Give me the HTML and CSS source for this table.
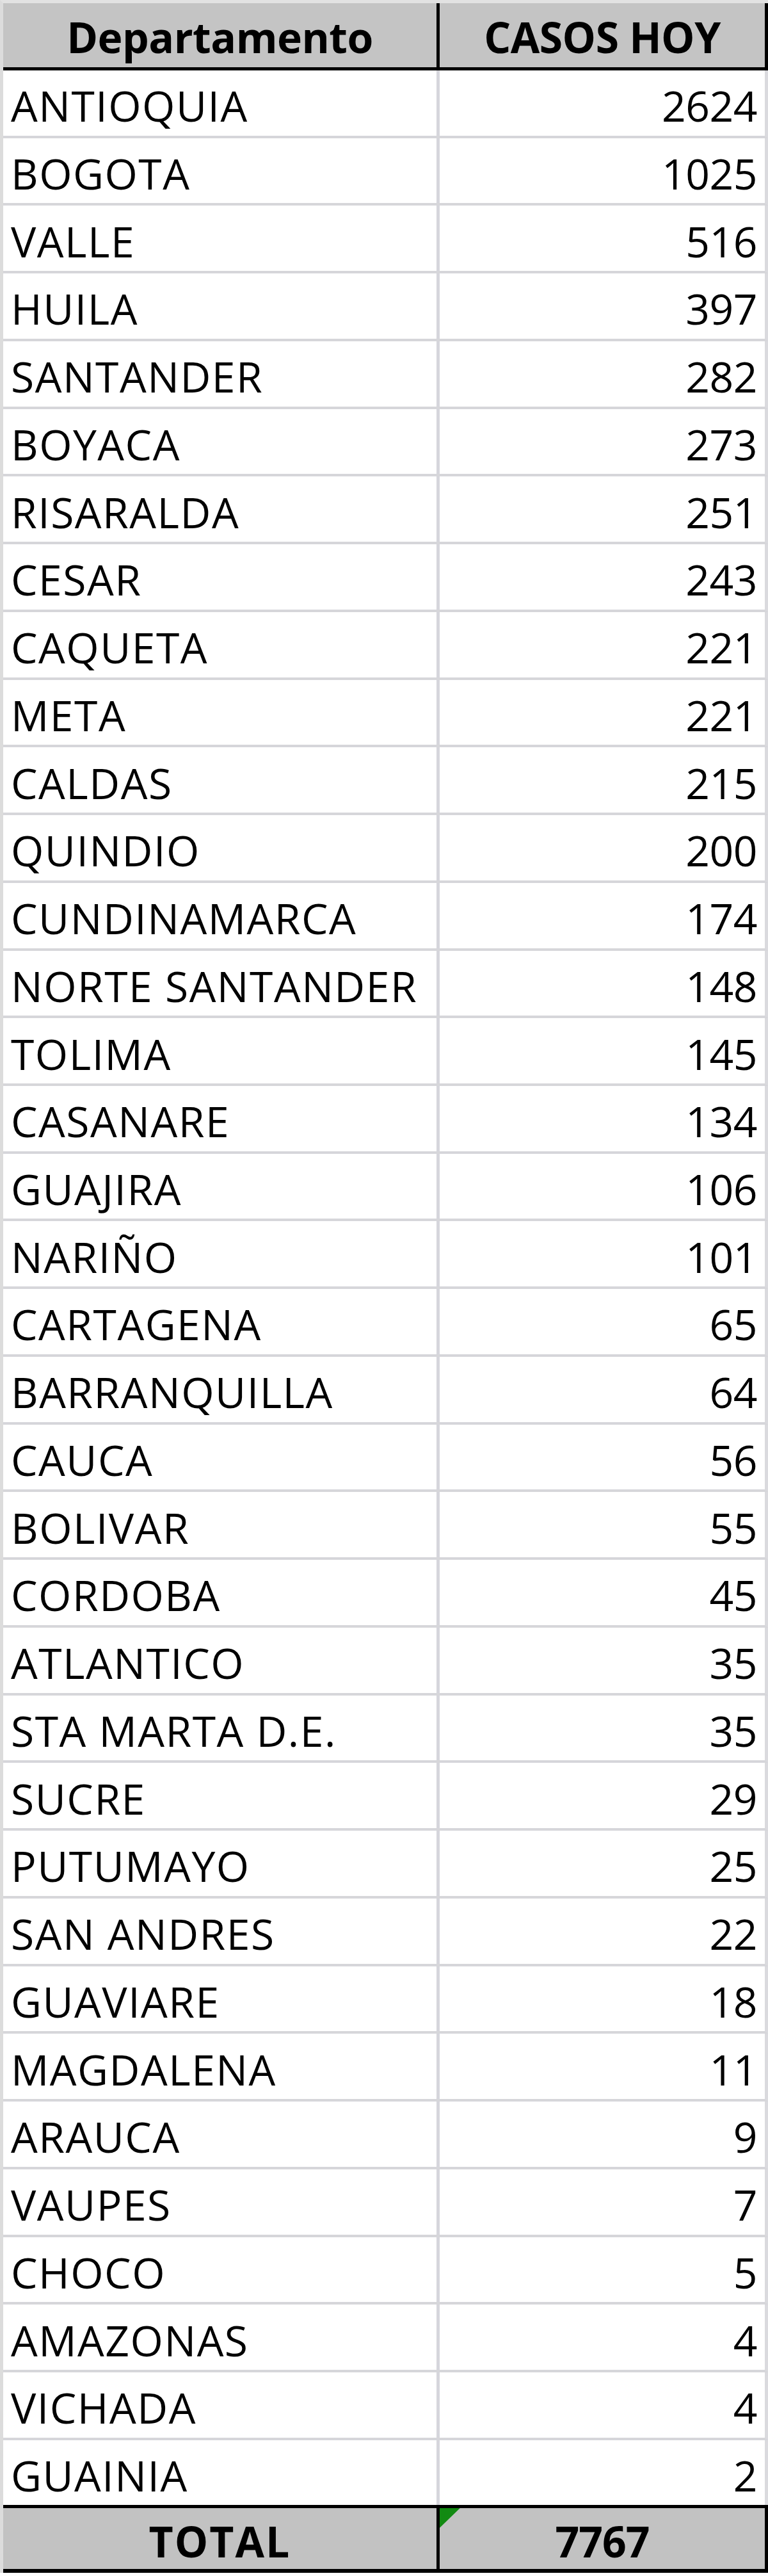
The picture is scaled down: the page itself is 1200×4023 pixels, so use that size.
FILE: index.html
```html
<!DOCTYPE html>
<html lang="es">
<head>
<meta charset="utf-8">
<title>Casos hoy por departamento</title>
<link rel="stylesheet" href="styles.css">
</head>
<body>
<div class="sheet">
  <div class="row head">
    <div class="cell name">Departamento</div>
    <div class="cell num">CASOS HOY</div>
  </div>
  <div class="row"><div class="cell name">ANTIOQUIA</div><div class="cell num">2624</div></div>
  <div class="row"><div class="cell name">BOGOTA</div><div class="cell num">1025</div></div>
  <div class="row"><div class="cell name">VALLE</div><div class="cell num">516</div></div>
  <div class="row"><div class="cell name">HUILA</div><div class="cell num">397</div></div>
  <div class="row"><div class="cell name">SANTANDER</div><div class="cell num">282</div></div>
  <div class="row"><div class="cell name">BOYACA</div><div class="cell num">273</div></div>
  <div class="row"><div class="cell name">RISARALDA</div><div class="cell num">251</div></div>
  <div class="row"><div class="cell name">CESAR</div><div class="cell num">243</div></div>
  <div class="row"><div class="cell name">CAQUETA</div><div class="cell num">221</div></div>
  <div class="row"><div class="cell name">META</div><div class="cell num">221</div></div>
  <div class="row"><div class="cell name">CALDAS</div><div class="cell num">215</div></div>
  <div class="row"><div class="cell name">QUINDIO</div><div class="cell num">200</div></div>
  <div class="row"><div class="cell name">CUNDINAMARCA</div><div class="cell num">174</div></div>
  <div class="row"><div class="cell name">NORTE SANTANDER</div><div class="cell num">148</div></div>
  <div class="row"><div class="cell name">TOLIMA</div><div class="cell num">145</div></div>
  <div class="row"><div class="cell name">CASANARE</div><div class="cell num">134</div></div>
  <div class="row"><div class="cell name">GUAJIRA</div><div class="cell num">106</div></div>
  <div class="row"><div class="cell name">NARIÑO</div><div class="cell num">101</div></div>
  <div class="row"><div class="cell name">CARTAGENA</div><div class="cell num">65</div></div>
  <div class="row"><div class="cell name">BARRANQUILLA</div><div class="cell num">64</div></div>
  <div class="row"><div class="cell name">CAUCA</div><div class="cell num">56</div></div>
  <div class="row"><div class="cell name">BOLIVAR</div><div class="cell num">55</div></div>
  <div class="row"><div class="cell name">CORDOBA</div><div class="cell num">45</div></div>
  <div class="row"><div class="cell name">ATLANTICO</div><div class="cell num">35</div></div>
  <div class="row"><div class="cell name">STA MARTA D.E.</div><div class="cell num">35</div></div>
  <div class="row"><div class="cell name">SUCRE</div><div class="cell num">29</div></div>
  <div class="row"><div class="cell name">PUTUMAYO</div><div class="cell num">25</div></div>
  <div class="row"><div class="cell name">SAN ANDRES</div><div class="cell num">22</div></div>
  <div class="row"><div class="cell name">GUAVIARE</div><div class="cell num">18</div></div>
  <div class="row"><div class="cell name">MAGDALENA</div><div class="cell num">11</div></div>
  <div class="row"><div class="cell name">ARAUCA</div><div class="cell num">9</div></div>
  <div class="row"><div class="cell name">VAUPES</div><div class="cell num">7</div></div>
  <div class="row"><div class="cell name">CHOCO</div><div class="cell num">5</div></div>
  <div class="row"><div class="cell name">AMAZONAS</div><div class="cell num">4</div></div>
  <div class="row"><div class="cell name">VICHADA</div><div class="cell num">4</div></div>
  <div class="row last"><div class="cell name">GUAINIA</div><div class="cell num">2</div></div>
  <div class="row total">
    <div class="cell name">TOTAL</div>
    <div class="cell num"><span class="flag"></span>7767</div>
  </div>
</div>
</body>
</html>
```
FILE: styles.css
```css
html, body {
  margin: 0;
  padding: 0;
  background: #ffffff;
}

.sheet {
  width: 1200px;
  box-sizing: border-box;
  border-top: 5px solid #e2e2e2;
  border-left: 5px solid #dcdcdc;
  font-family: "Open Sans", "Noto Sans", "Liberation Sans", sans-serif;
  font-size: 66px;
  color: #000000;
}

.row {
  display: grid;
  grid-template-columns: 682px 508px;
  box-sizing: border-box;
  height: 105.74px;
  border-bottom: 4.64px solid #d6d6da;
  border-right: 5px solid #dadade;
}

.cell {
  display: flex;
  align-items: center;
  box-sizing: border-box;
  line-height: 1.2;
  padding-top: 8px;
  white-space: nowrap;
}

.cell.name {
  border-right: 5px solid #d6d6dc;
  padding-left: 12px;
  letter-spacing: 1.5px;
}

.cell.num {
  justify-content: flex-end;
  padding-right: 12px;
  letter-spacing: -0.5px;
}

.row.last {
  height: 101px;
  border-bottom: 0;
}

.row.head {
  height: 105px;
  background: #c4c4c4;
  border-bottom: 5px solid #000000;
  border-right-color: #000000;
  font-weight: bold;
}

.row.head .cell {
  justify-content: center;
  padding: 5px 0 0 0;
  letter-spacing: -0.5px;
}

.row.head .cell.name,
.row.total .cell.name {
  border-right-color: #000000;
}

.row.total {
  height: 106px;
  background: #c2c2c2;
  border-top: 5px solid #000000;
  border-bottom: 6px solid #000000;
  border-right-color: #000000;
  font-weight: bold;
  position: relative;
}

.row.total .cell {
  justify-content: center;
  padding: 9px 0 0 0;
  position: relative;
}

.row.total .cell.name {
  letter-spacing: 2px;
}

.row.total .cell.num {
  letter-spacing: -1px;
}

.flag {
  position: absolute;
  left: 0;
  top: 0;
  width: 32px;
  height: 31px;
  background: #128a12;
  clip-path: polygon(0 0, 100% 0, 0 100%);
}
```
